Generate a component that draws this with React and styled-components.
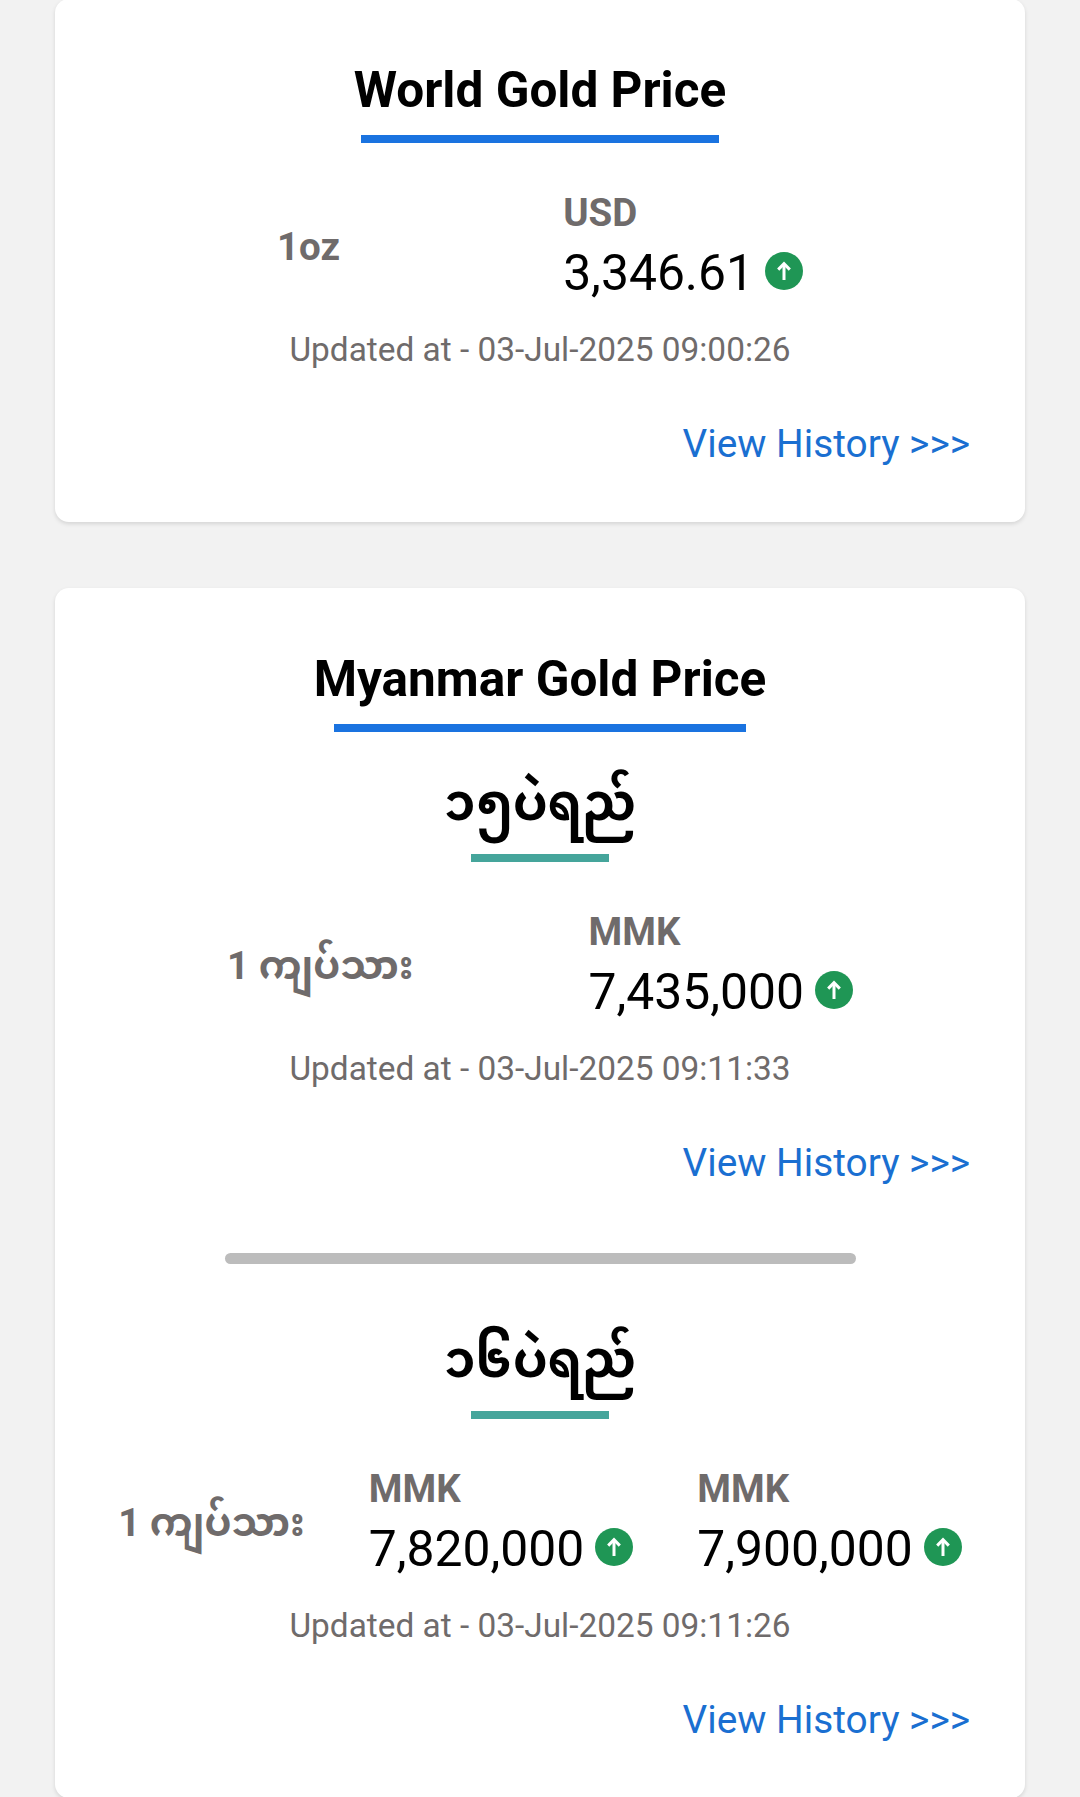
import React from 'react';
import styled, { createGlobalStyle } from 'styled-components';

const GlobalStyle = createGlobalStyle`
  html, body {
    margin: 0;
    height: 1797px;
    overflow: hidden;
    background: #f2f2f2;
    font-family: Roboto, "Noto Sans Myanmar", "Padauk", "Noto Sans", sans-serif;
  }
`;

const Page = styled.div`
  display: flex;
  flex-direction: column;
  gap: 66px;
  padding: 0 55px;
  margin-top: -1px;
`;

const Card = styled.section`
  display: flex;
  flex-direction: column;
  align-items: center;
  background: #fff;
  border-radius: 14px;
  box-shadow: 0 2px 4px rgba(0, 0, 0, 0.12);
  padding: 58px 55px 55px;
`;

const Heading = styled.h2`
  margin: 0;
  font-size: 49.5px;
  line-height: 66px;
  font-weight: 700;
  color: #000;
`;

const HeadingRule = styled.div`
  width: ${({ $width }) => $width}px;
  height: 8px;
  margin-top: 12px;
  background: #1a73e0;
`;

const Karat = styled.h3`
  margin: 26px 0 0;
  font-size: 49.5px;
  line-height: 90px;
  font-weight: 700;
  color: #000;
`;

const KaratRule = styled.div`
  width: 138px;
  height: 8px;
  margin-top: 6px;
  background: #45a59b;
`;

const PriceRow = styled.div`
  display: flex;
  justify-content: center;
  align-items: center;
  gap: ${({ $gap }) => $gap}px;
  margin-top: 47px;
  width: 100%;
`;

const Unit = styled.div`
  font-size: 38.5px;
  line-height: 46px;
  font-weight: 700;
  color: #6f6b6b;
  white-space: nowrap;
`;

const PriceCol = styled.div`
  display: flex;
  flex-direction: column;
`;

const Currency = styled.div`
  font-size: 38.5px;
  line-height: 46px;
  font-weight: 700;
  color: #6f6b6b;
`;

const PriceLine = styled.div`
  display: flex;
  align-items: center;
  gap: 11px;
  margin-top: 7px;
  font-size: 49.8px;
  line-height: 60px;
  color: #000;
  white-space: nowrap;
`;

const UpBadge = styled.span`
  display: flex;
  align-items: center;
  justify-content: center;
  width: 38px;
  height: 38px;
  margin-bottom: 4px;
  border-radius: 50%;
  background: #1f9655;
`;

const Updated = styled.div`
  margin-top: 27px;
  font-size: 33.4px;
  line-height: 40px;
  color: #6f6b6b;
`;

const HistoryLink = styled.a`
  align-self: flex-end;
  margin-top: 51px;
  font-size: 38.8px;
  line-height: 46px;
  color: #1a6fd1;
  text-decoration: none;
`;

const Divider = styled.div`
  width: 631px;
  height: 11px;
  margin: 67px 0 25px;
  border-radius: 6px;
  background: #bcbcbc;
`;

const UpArrow = () => (
  <svg width="18" height="20" viewBox="0 0 18 20" fill="none">
    <path d="M9 19V3" stroke="#fff" strokeWidth="3" />
    <path d="M3.2 8.6 9 2.6l5.8 6" stroke="#fff" strokeWidth="3" />
  </svg>
);

const Price = ({ currency, value }) => (
  <PriceCol>
    <Currency>{currency}</Currency>
    <PriceLine>
      {value}
      <UpBadge>
        <UpArrow />
      </UpBadge>
    </PriceLine>
  </PriceCol>
);

export default function App() {
  return (
    <>
      <GlobalStyle />
      <Page>
        <Card>
          <Heading>World Gold Price</Heading>
          <HeadingRule $width={358} />
          <PriceRow $gap={223}>
            <Unit>1oz</Unit>
            <Price currency="USD" value="3,346.61" />
          </PriceRow>
          <Updated>Updated at - 03-Jul-2025 09:00:26</Updated>
          <HistoryLink href="#">View History &gt;&gt;&gt;</HistoryLink>
        </Card>
        <Card>
          <Heading>Myanmar Gold Price</Heading>
          <HeadingRule $width={412} />
          <Karat>၁၅ပဲရည်</Karat>
          <KaratRule />
          <PriceRow $gap={175}>
            <Unit>1 ကျပ်သား</Unit>
            <Price currency="MMK" value="7,435,000" />
          </PriceRow>
          <Updated>Updated at - 03-Jul-2025 09:11:33</Updated>
          <HistoryLink href="#">View History &gt;&gt;&gt;</HistoryLink>
          <Divider />
          <Karat>၁၆ပဲရည်</Karat>
          <KaratRule />
          <PriceRow $gap={64}>
            <Unit>1 ကျပ်သား</Unit>
            <Price currency="MMK" value="7,820,000" />
            <Price currency="MMK" value="7,900,000" />
          </PriceRow>
          <Updated>Updated at - 03-Jul-2025 09:11:26</Updated>
          <HistoryLink href="#">View History &gt;&gt;&gt;</HistoryLink>
        </Card>
      </Page>
    </>
  );
}
